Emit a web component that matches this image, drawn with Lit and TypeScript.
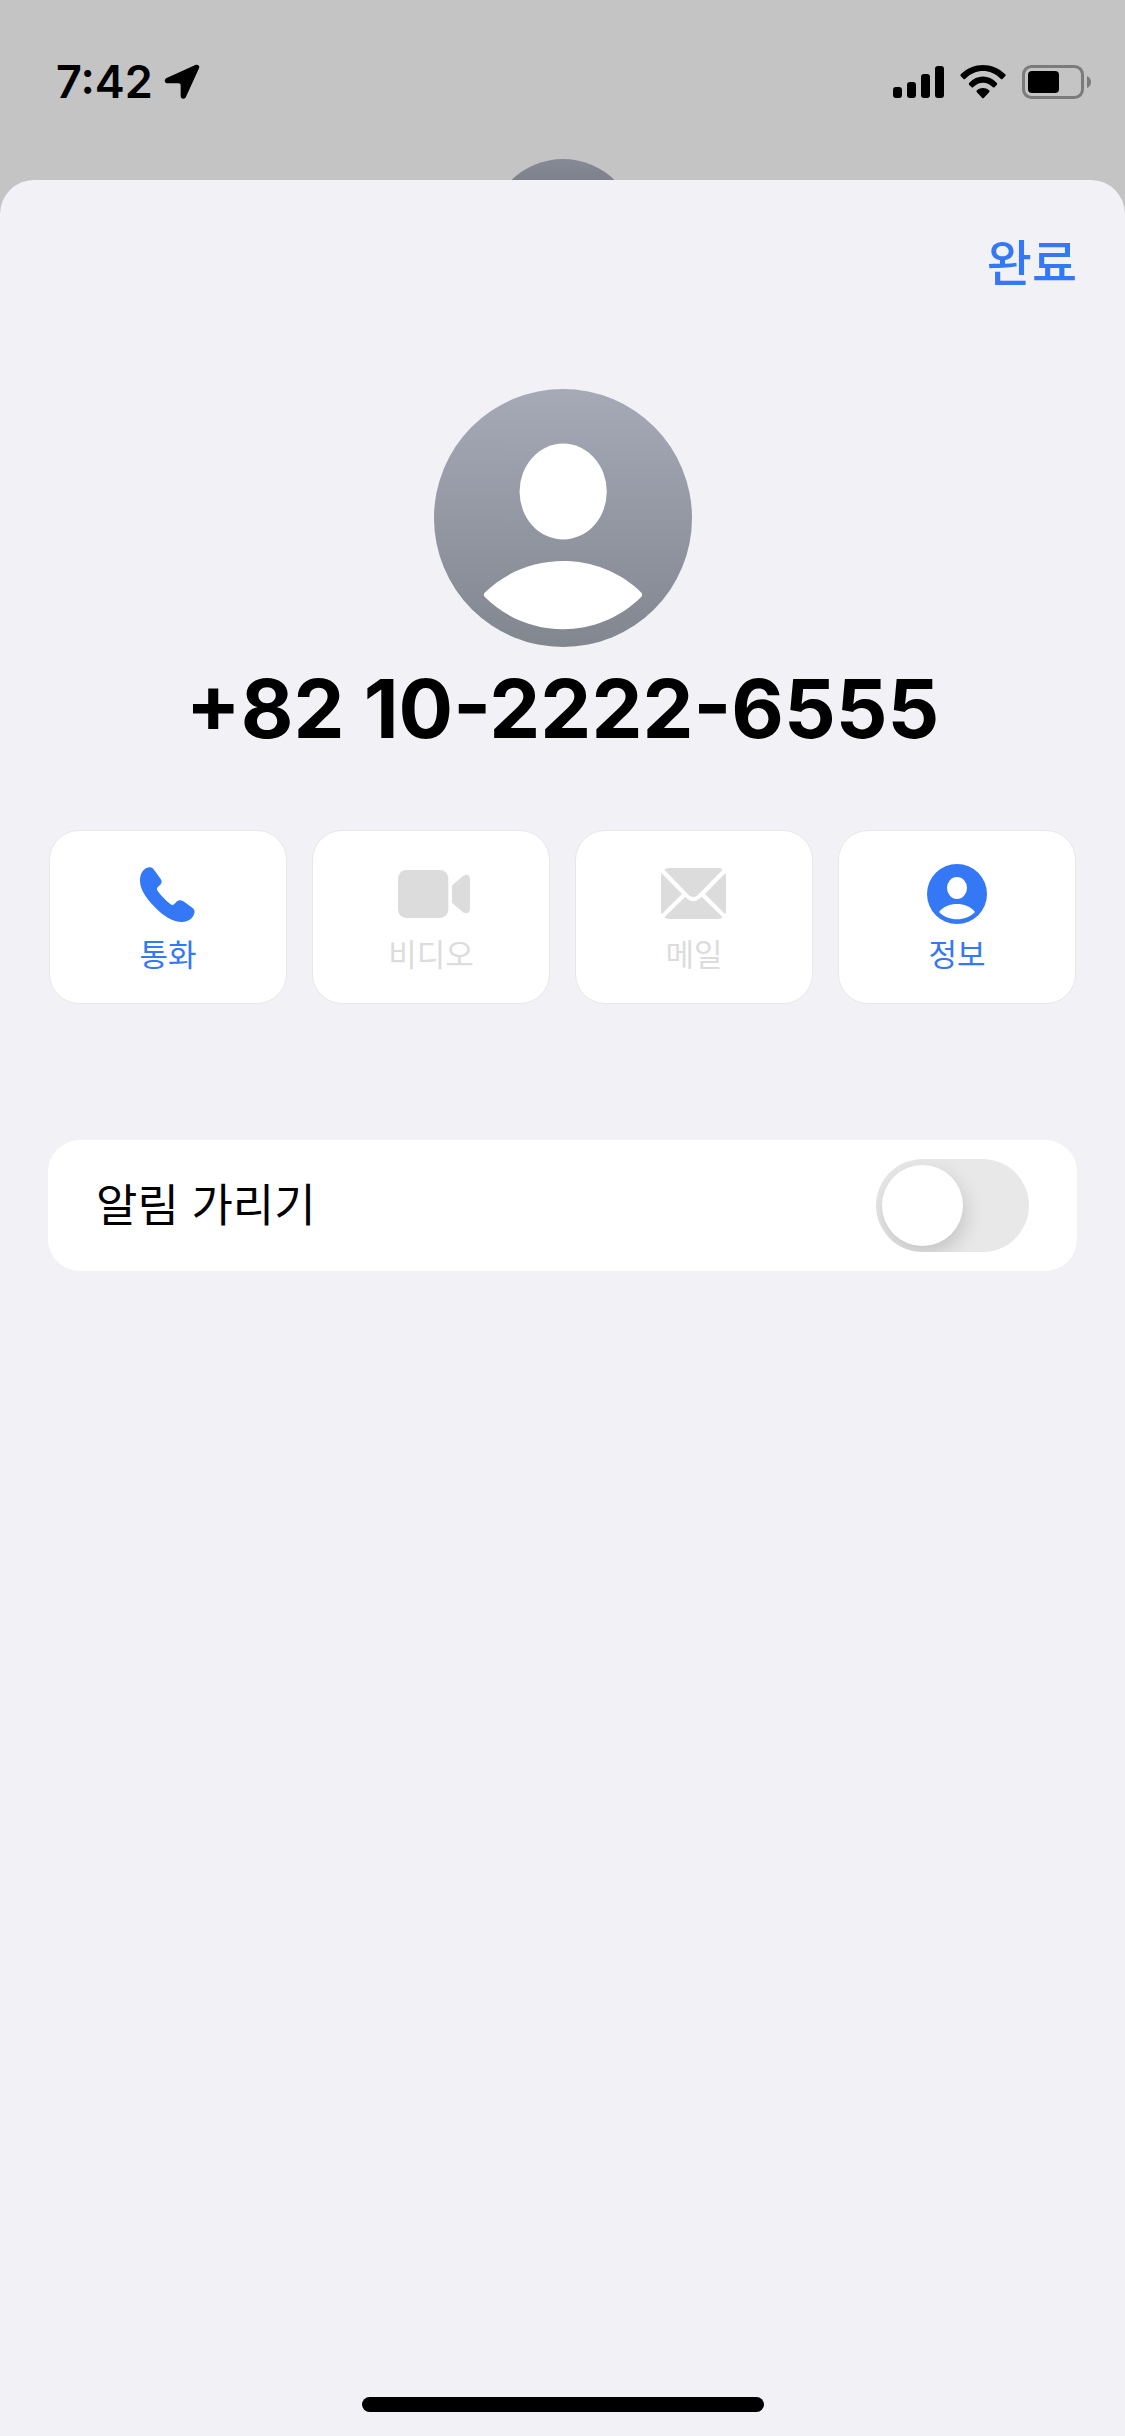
import { LitElement, html, css, svg, type TemplateResult } from "lit";
import { customElement, property, state } from "lit/decorators.js";

const phoneIcon = html`<svg class="glyph" viewBox="294 162 240 180" aria-hidden="true">
  <path fill="currentColor" d="M330 212C330 188 342 174 357 172C364 171 369 175 373 181L392 207C396 213 396 219 391 224L383 232C380 235 380 239 383 243C392 256 406 270 421 282C425 286 429 286 433 282L441 274C446 270 452 269 459 273L487 293C493 298 495 303 493 310C489 325 475 336 456 336C430 336 400 318 374 291C347 263 330 237 330 212Z"/>
</svg>`;

const videoIcon = html`<svg class="glyph" viewBox="273 162 240 180" aria-hidden="true">
  <rect x="294" y="180" width="151" height="144" rx="25" fill="currentColor"/>
  <path fill="currentColor" d="M456 230Q456 226 460 223L488 199C498 190 510 194 510 207V297C510 310 498 314 488 306L460 282Q456 279 456 275Z"/>
</svg>`;

const mailIcon = html`<svg class="glyph" viewBox="282 162 240 180" aria-hidden="true">
  <g fill="currentColor">
    <path d="M313 179Q318 174 326 174H475Q483 174 488 179L413 256Q400 267 387 256Z"/>
    <path d="M303 200Q303 194 305 190L366 252L305 313Q303 309 303 303Z"/>
    <path d="M498 200Q498 194 496 190L435 252L496 313Q498 309 498 303Z"/>
    <path d="M313 322L376 260L383 267Q400 281 417 267L425 260L488 322Q483 327 475 327H326Q318 327 313 322Z"/>
  </g>
</svg>`;

const infoIcon = html`<svg class="glyph" viewBox="291 162 240 180" aria-hidden="true">
  <circle cx="411" cy="252" r="90" fill="currentColor"/>
  <ellipse cx="411" cy="234" rx="30" ry="33" fill="#fff"/>
  <path fill="#fff" d="M357 306C382 274 440 274 465 306C436 335 386 335 357 306Z"/>
</svg>`;

@customElement("status-bar")
class StatusBar extends LitElement {
  static styles = css`
    :host { display: block; }
    .bar {
      display: flex;
      justify-content: space-between;
      align-items: center;
      height: 66px;
      padding: 49px 34px 0 56px;
    }
    .left { display: flex; align-items: center; gap: 11px; }
    .time { font-size: 45px; line-height: 54px; font-weight: 600; }
    .right { display: flex; align-items: center; gap: 15px; }
    .location { width: 36px; height: 36px; }
    .signal { width: 52px; height: 34px; }
    .wifi { width: 46px; height: 34px; }
    .battery { width: 70px; height: 34px; }
    svg { display: block; }
  `;

  render() {
    return html`<div class="bar">
      <div class="left">
        <span class="time">7:42</span>
        <svg class="location" viewBox="490 105 108 108" aria-hidden="true">
          <path d="M584 108C592 105 598 110 595 118L556 203C552 212 540 211 540 201V170C540 165 538 163 533 163H501C491 163 489 151 498 147Z"/>
        </svg>
      </div>
      <div class="right">
        <svg class="signal" viewBox="0 0 52 34" aria-hidden="true">
          ${[[0, 22], [14, 17], [28, 9], [42, 1]].map(
            ([x, y]) => svg`<rect x=${x} y=${y} width="9" height=${33 - y} rx="3"/>`
          )}
        </svg>
        <svg class="wifi" viewBox="300 74 138 102" aria-hidden="true">
          <path d="M302 107Q300 104 303 101C341 65 397 65 435 101Q438 104 436 107L428 115Q425 118 422 115C391 84 347 84 316 115Q313 118 310 115Z"/>
          <path d="M327 133Q325 130 328 127C351 102 387 102 410 127Q413 130 411 133L404 140Q401 143 398 140C381 123 357 123 340 140Q337 143 334 140Z"/>
          <path d="M350 155Q348 152 351 150C361 141 377 141 387 150Q390 152 388 155L372 172Q369 175 366 172Z"/>
        </svg>
        <svg class="battery" viewBox="-1 0 70 34" aria-hidden="true">
          <rect x="1.5" y="1.5" width="59" height="31" rx="8" fill="none" stroke="#7b7b7b" stroke-width="3"/>
          <rect x="6" y="6" width="31" height="22" rx="4"/>
          <path fill="#7b7b7b" d="M65 11Q69 13 69 17T65 23Z"/>
        </svg>
      </div>
    </div>`;
  }
}

@customElement("action-tile")
class ActionTile extends LitElement {
  @property() label = "";
  @property({ type: Boolean }) disabled = false;
  @property({ attribute: false }) icon?: TemplateResult;

  static styles = css`
    :host { display: block; }
    .tile {
      box-sizing: border-box;
      width: 100%;
      display: flex;
      flex-direction: column;
      align-items: center;
      gap: 7px;
      padding: 33px 0 24px;
      border: 1px solid #e8e8e9;
      border-radius: 30px;
      background: #fff;
      color: #3478f6;
      font: inherit;
      font-size: 31px;
      line-height: 48px;
    }
    .tile:disabled { color: #dcdcdc; }
    .glyph { display: block; width: 80px; height: 60px; }
  `;

  render() {
    return html`<button class="tile" type="button" ?disabled=${this.disabled}>
      ${this.icon}
      <span>${this.label}</span>
    </button>`;
  }
}

@customElement("app-root")
class AppRoot extends LitElement {
  @state() private hideAlerts = false;

  private actions = [
    { label: "통화", icon: phoneIcon, disabled: false },
    { label: "비디오", icon: videoIcon, disabled: true },
    { label: "메일", icon: mailIcon, disabled: true },
    { label: "정보", icon: infoIcon, disabled: false },
  ];

  static styles = css`
    :host {
      display: flex;
      flex-direction: column;
      min-height: 100vh;
      background: #c4c4c4;
      color: #000;
      font-family: Inter, "Noto Sans CJK KR", sans-serif;
    }
    .backdrop {
      display: flex;
      flex-direction: column;
      align-items: center;
      height: 180px;
      margin-bottom: -40px;
      padding-bottom: 40px;
      box-sizing: content-box;
      overflow: hidden;
    }
    .backdrop status-bar { align-self: stretch; }
    .peek {
      flex: none;
      width: 148px;
      height: 148px;
      margin-top: 44px;
      border-radius: 50%;
      background: linear-gradient(#868a96, #7b7e88 20%, #6b6e75);
    }
    .sheet {
      position: relative;
      flex: 1;
      display: flex;
      flex-direction: column;
      padding: 54px 48px 24px;
      border-radius: 34px 34px 0 0;
      background: #f1f1f6;
    }
    .done {
      align-self: flex-end;
      padding: 0;
      border: 0;
      background: none;
      color: #3478f6;
      font: inherit;
      font-size: 49px;
      font-weight: 500;
      line-height: 60px;
    }
    .avatar {
      display: block;
      align-self: center;
      width: 258px;
      height: 258px;
      margin-top: 95px;
    }
    .number {
      margin: 14px 0 0;
      text-align: center;
      font-size: 81px;
      font-weight: 700;
      line-height: 96px;
    }
    .actions {
      display: grid;
      grid-template-columns: repeat(4, 1fr);
      gap: 25px;
      margin-top: 73px;
      padding: 0 1px;
    }
    .row {
      display: flex;
      align-items: center;
      justify-content: space-between;
      margin-top: 136px;
      padding: 19px 48px;
      border-radius: 32px;
      background: #fff;
      font-size: 45px;
      line-height: 60px;
    }
    .switch {
      appearance: none;
      box-sizing: border-box;
      display: flex;
      width: 153px;
      height: 93px;
      margin: 0;
      padding: 6px;
      border-radius: 47px;
      background: #e8e8e8;
      overflow: hidden;
    }
    .switch::before {
      content: "";
      width: 81px;
      height: 81px;
      border-radius: 50%;
      background: #fff;
      box-shadow: 2px 8px 20px rgba(0, 0, 0, 0.16);
    }
    .switch:checked { justify-content: flex-end; background: #34c759; }
    .home {
      align-self: center;
      width: 402px;
      height: 15px;
      margin-top: auto;
      border-radius: 8px;
      background: #000;
    }
  `;

  render() {
    return html`
      <div class="backdrop">
        <status-bar></status-bar>
        <div class="peek"></div>
      </div>
      <main class="sheet">
        <button class="done" type="button">완료</button>
        <svg class="avatar" viewBox="70 56 775 775" aria-hidden="true">
          <defs>
            <linearGradient id="shade" x1="0" y1="0" x2="0" y2="1">
              <stop offset="0" stop-color="#a6aab7"/>
              <stop offset="1" stop-color="#82868f"/>
            </linearGradient>
          </defs>
          <circle cx="457.5" cy="443.5" r="387.5" fill="url(#shade)"/>
          <ellipse cx="458" cy="364" rx="131" ry="144" fill="#fff"/>
          <path fill="#fff" d="M222 668C351 541 565 541 693 668Q698 674 693 680C563 810 351 810 222 680Q217 674 222 668Z"/>
        </svg>
        <h1 class="number">+82 10-2222-6555</h1>
        <div class="actions">
          ${this.actions.map(
            (a) => html`<action-tile .label=${a.label} .icon=${a.icon} ?disabled=${a.disabled}></action-tile>`
          )}
        </div>
        <label class="row">
          <span>알림 가리기</span>
          <input
            class="switch"
            type="checkbox"
            role="switch"
            .checked=${this.hideAlerts}
            @change=${(e: Event) => (this.hideAlerts = (e.target as HTMLInputElement).checked)}
          />
        </label>
        <div class="home"></div>
      </main>
    `;
  }
}
